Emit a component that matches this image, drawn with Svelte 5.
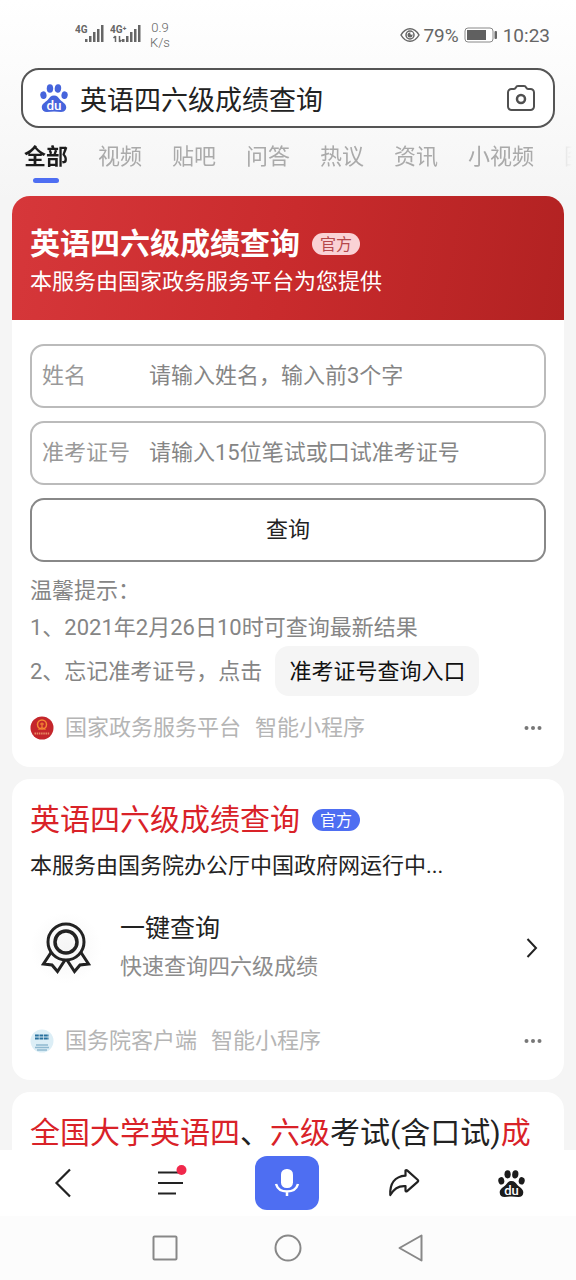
<script lang="ts">
	let query = $state('英语四六级成绩查询');
	let name = $state('');
	let ticket = $state('');
	let activeTab = $state('全部');

	const tabs = ['全部', '视频', '贴吧', '问答', '热议', '资讯', '小视频', '图片'];
	const signalBars = [3, 6, 10, 13, 17];
</script>

{#snippet paw(size: number)}
	<svg class="paw" width={size} height={size} viewBox="0 0 27 27" aria-hidden="true">
		<ellipse cx="3.3" cy="10.8" rx="3" ry="3.7" transform="rotate(-12 3.3 10.8)" />
		<ellipse cx="9.6" cy="4.3" rx="3.1" ry="4.1" />
		<ellipse cx="17.3" cy="4.3" rx="3.1" ry="4.1" transform="rotate(6 17.3 4.3)" />
		<ellipse cx="23.7" cy="10.8" rx="3" ry="3.7" transform="rotate(12 23.7 10.8)" />
		<path d="M13.5 11c-3 0-4.300 2-5.900 4.100-1.700 2.100-5.900 3.700-5.900 7.300 0 3 2.100 4.500 4.900 4.500 2.400 0 4.500-.5 6.900-.5s4.500.5 6.900.5c2.800 0 4.900-1.500 4.900-4.500 0-3.600-4.200-5.200-5.900-7.300-1.600-2.100-2.900-4.100-5.900-4.100z" />
		<text x="13.5" y="25" text-anchor="middle">du</text>
	</svg>
{/snippet}

{#snippet signal(label: string, data: boolean)}
	<svg width="32" height="22" viewBox="0 0 32 22" aria-hidden="true">
		<text class="signal-label" x="0" y="9">{label}</text>
		{#if data}
			<path d="M5.500 12v6M3.500 14l2-2M9.500 12v6M9.500 18l2-2" fill="none" stroke="#666" stroke-width="1.500" />
		{/if}
		{#each signalBars as bar, i}
			<rect x={10 + i * 4 + (data ? 2 : 0)} y={18 - bar} width="2.500" height={bar} fill="#666" />
		{/each}
	</svg>
{/snippet}

{#snippet more()}
	<button class="icon-btn" aria-label="更多">
		<svg width="18" height="6" viewBox="0 0 18 6" fill="#777">
			<circle cx="2.500" cy="3" r="2" />
			<circle cx="9" cy="3" r="2" />
			<circle cx="15.500" cy="3" r="2" />
		</svg>
	</button>
{/snippet}

<div class="screen">
	<header class="status">
		<div class="status-group">
			{@render signal('4G', false)}
			{@render signal('4G⁺', true)}
			<span class="speed">0.9<br />K/s</span>
		</div>
		<div class="status-group right">
			<svg width="20" height="16" viewBox="0 0 20 16" aria-hidden="true" fill="none" stroke="#666" stroke-width="1.500">
				<path d="M1 8c2.300-4 5.300-6.300 9-6.300S16.700 4 19 8c-2.300 4-5.300 6.300-9 6.300S3.300 12 1 8z" />
				<circle cx="10" cy="8" r="4" />
				<circle cx="10" cy="8" r="2.500" fill="#666" stroke="none" />
				<circle cx="11.500" cy="6.500" r="1.200" fill="#fff" stroke="none" />
			</svg>
			<span>79%</span>
			<svg class="battery" width="34" height="16" viewBox="0 0 34 16" aria-hidden="true">
				<rect x="1" y="1" width="28" height="14" rx="3" fill="#fff" stroke="#888" />
				<rect x="3" y="3" width="19" height="10" fill="#606060" />
				<rect x="30.500" y="4" width="2.500" height="8" rx="1" fill="#666" />
			</svg>
			<span>10:23</span>
		</div>
	</header>

	<form class="search" onsubmit={(e) => e.preventDefault()}>
		{@render paw(28)}
		<input type="text" aria-label="搜索" bind:value={query} />
		<button class="icon-btn" type="button" aria-label="拍照搜索">
			<svg width="28" height="26" viewBox="0 0 28 26" fill="none" stroke="#505050" stroke-width="2" stroke-linejoin="round">
				<path d="M4.500 4H7c1 0 1.300-.4 1.700-1.200C9.200 1.600 9.700 1 11 1h6c1.300 0 1.800.6 2.300 1.800.4.8.7 1.200 1.700 1.200h2.500A3.500 3.500 0 0 1 27 7.500v14a3.500 3.500 0 0 1-3.500 3.500h-19A3.500 3.500 0 0 1 1 21.500v-14A3.500 3.500 0 0 1 4.500 4z" />
				<circle cx="14" cy="14" r="4" stroke-width="2.500" />
			</svg>
		</button>
	</form>

	<nav class="tabs">
		{#each tabs as tab}
			<button class="tab" class:active={tab === activeTab} onclick={() => (activeTab = tab)}>{tab}</button>
		{/each}
	</nav>

	<main class="results">
		<section class="card">
			<div class="banner">
				<h2>英语四六级成绩查询 <span class="tag">官方</span></h2>
				<p>本服务由国家政务服务平台为您提供</p>
			</div>
			<form class="query-form" onsubmit={(e) => e.preventDefault()}>
				<div class="field">
					<label for="name">姓名</label>
					<input id="name" type="text" placeholder="请输入姓名，输入前3个字" bind:value={name} />
				</div>
				<div class="field">
					<label for="ticket">准考证号</label>
					<input id="ticket" type="text" placeholder="请输入15位笔试或口试准考证号" bind:value={ticket} />
				</div>
				<button class="submit">查询</button>
			</form>
			<div class="tips">
				<p>温馨提示：</p>
				<p>1、2021年2月26日10时可查询最新结果</p>
				<div class="tip-row">
					<span>2、忘记准考证号，点击</span>
					<button class="entry">准考证号查询入口</button>
				</div>
			</div>
			<footer class="source">
				<svg width="24" height="24" viewBox="0 0 24 24" aria-hidden="true">
					<circle cx="12" cy="12" r="11.500" fill="#c4262b" />
					<circle cx="12" cy="8.500" r="4.500" fill="none" stroke="#f58a33" stroke-width="1.500" />
					<path d="M10 8h4M12 6.500v6M8.500 13.500l3.500-2 3.500 2" fill="none" stroke="#f58a33" stroke-width="1.200" />
					<path d="M4.500 17.500h15" stroke="#e88a62" stroke-width="2" stroke-dasharray="1.500 .7" />
				</svg>
				<span>国家政务服务平台</span>
				<span>智能小程序</span>
				{@render more()}
			</footer>
		</section>

		<section class="card padded">
			<h2 class="title"><em>英语四六级成绩查询</em> <span class="tag blue">官方</span></h2>
			<p class="desc">本服务由国务院办公厅中国政府网运行中...</p>
			<a class="service" href="#query">
				<span class="medal">
					<svg width="50" height="52" viewBox="0 0 50 52" fill="none" stroke="#222" stroke-width="3">
						<circle cx="25" cy="20" r="18" />
						<circle cx="25" cy="20" r="11" stroke-width="3.500" />
						<path d="M10 30.500L2.500 42l8.500 1 5.500 6.500L24 38M40 30.500L47.500 42l-8.500 1-5.500 6.500L26 38" />
					</svg>
				</span>
				<span class="service-text">
					<strong>一键查询</strong>
					<small>快速查询四六级成绩</small>
				</span>
				<svg width="12" height="20" viewBox="0 0 12 20" fill="none" stroke="#222" stroke-width="2">
					<path d="M1.500 1l8.500 9-8.500 9" />
				</svg>
			</a>
			<footer class="source">
				<svg width="24" height="24" viewBox="0 0 24 24" aria-hidden="true">
					<circle cx="12" cy="12" r="11.500" fill="#dceef6" />
					<path d="M5 6.500h14M5 9.500h14" stroke="#28719e" stroke-width="2.200" stroke-dasharray="3.800 .7" />
					<path d="M6 16h12M5 18.500h14M7 21h10" stroke="#8fb9d0" stroke-width="1.500" />
				</svg>
				<span>国务院客户端</span>
				<span>智能小程序</span>
				{@render more()}
			</footer>
		</section>

		<section class="card padded">
			<h2 class="title"><em>全国大学英语四</em>、<em>六级</em>考试(含口试)<em>成</em></h2>
		</section>
	</main>

	<nav class="toolbar">
		<button class="icon-btn" aria-label="返回">
			<svg width="18" height="30" viewBox="0 0 18 30" fill="none" stroke="#222" stroke-width="2.200">
				<path d="M16 1.500L2.500 15 16 28.500" />
			</svg>
		</button>
		<button class="icon-btn" aria-label="菜单">
			<svg width="34" height="38" viewBox="0 0 34 38" stroke="#222" stroke-width="2.200">
				<path d="M5 8.500h20M5 19h25M5 29.500h18" />
				<circle cx="28.500" cy="6" r="5" fill="#f0284b" stroke="none" />
			</svg>
		</button>
		<button class="mic" aria-label="语音搜索">
			<svg width="26" height="30" viewBox="0 0 26 30">
				<rect x="7" y="1" width="12" height="19" rx="5.500" fill="#fff" />
				<path d="M2 16c1.500 5 5.500 7.500 11 7.500S22.500 21 24 16M13 23v5" fill="none" stroke="#fff" stroke-width="2.500" />
			</svg>
		</button>
		<button class="icon-btn" aria-label="分享">
			<svg width="32" height="30" viewBox="0 0 32 30" fill="none" stroke="#222" stroke-width="2.200" stroke-linejoin="round">
				<path d="M17.500 2.500c.5-.6 1-.6 1.600-.1l10.500 9.300c.8.8.8 1.400 0 2.100l-10.500 9.300c-.8.600-1.600.4-1.600-.6v-4.300c-6.500-.6-11.500 2.500-15.200 8.800C1.700 16 6.500 8.500 17.500 7.700z" />
			</svg>
		</button>
		<button class="icon-btn dark" aria-label="百度首页">
			{@render paw(27)}
		</button>
	</nav>

	<nav class="system">
		<button class="icon-btn" aria-label="最近任务">
			<svg width="28" height="28" viewBox="0 0 28 28"><rect x="2.500" y="2.500" width="23" height="23" rx="1" /></svg>
		</button>
		<button class="icon-btn" aria-label="主屏幕">
			<svg width="28" height="28" viewBox="0 0 28 28"><circle cx="14" cy="14" r="12.500" /></svg>
		</button>
		<button class="icon-btn" aria-label="后退">
			<svg width="28" height="28" viewBox="0 0 28 28"><path d="M24.500 1.500v25L2.500 14z" /></svg>
		</button>
	</nav>
</div>

<style>
	:global(body) {
		background: #f5f5f5;
	}
	.screen {
		display: flex;
		flex-direction: column;
		height: 100vh;
		background: linear-gradient(#fff, #f5f5f5 200px);
		font-family: Roboto, 'Noto Sans CJK SC', sans-serif;
		font-size: 22px;
		color: #222;
	}
	h2, p {
		margin: 0;
		font-weight: 400;
	}
	button, input {
		font: inherit;
		color: inherit;
		border: none;
		padding: 0;
		background: none;
		outline: none;
	}
	button {
		cursor: pointer;
	}
	svg {
		display: block;
		flex-shrink: 0;
	}
	.icon-btn {
		display: flex;
		align-items: center;
		justify-content: center;
	}
	.status {
		display: flex;
		justify-content: space-between;
		align-items: center;
		height: 68px;
		padding: 2px 26px 0 75px;
		box-sizing: border-box;
		color: #666;
		font-size: 19px;
	}
	.status-group {
		display: flex;
		align-items: center;
		gap: 3px;
	}
	.signal-label {
		font-size: 10px;
		font-weight: 700;
		fill: #666;
	}
	.speed {
		margin-left: 5px;
		font-size: 13px;
		font-weight: 300;
		line-height: 15px;
		text-align: center;
	}
	.battery {
		margin: 0 2px;
	}
	.search {
		display: flex;
		align-items: center;
		gap: 12px;
		height: 60px;
		margin: 0 21px;
		padding: 0 18px 0 17px;
		box-sizing: border-box;
		border: 2px solid #555;
		border-radius: 18px;
		background: #fff;
	}
	.search input {
		flex: 1;
		min-width: 0;
		font-size: 27px;
	}
	.paw {
		fill: #4664dc;
	}
	.paw text {
		font-size: 13px;
		font-weight: 500;
		fill: #fff;
	}
	.dark .paw {
		fill: #1c1c1c;
	}
	.tabs {
		display: flex;
		gap: 30px;
		height: 68px;
		margin-right: 4px;
		padding-left: 24px;
		overflow: hidden;
		flex-shrink: 0;
		mask-image: linear-gradient(to left, transparent, #000 32px);
	}
	.tab {
		display: flex;
		flex-direction: column;
		align-items: center;
		flex-shrink: 0;
		padding-top: 11px;
		line-height: 36px;
		color: #aaa;
	}
	.tab.active {
		color: #1c1c1c;
		font-weight: 700;
	}
	.tab.active::after {
		content: '';
		width: 26px;
		height: 5px;
		margin-top: 3px;
		border-radius: 3px;
		background: #4e6ef2;
	}
	.results {
		display: flex;
		flex-direction: column;
		gap: 12px;
		flex: 1;
		min-height: 0;
		padding: 0 12px;
		overflow: hidden;
	}
	.card {
		flex-shrink: 0;
		padding-bottom: 20px;
		border-radius: 18px;
		background: #fff;
		overflow: hidden;
	}
	.card.padded {
		padding-top: 22px;
	}
	.banner {
		padding: 29px 18px 19px;
		color: #fff;
		line-height: 38px;
		background: linear-gradient(100deg, #d6373a, #c92b2d 50%, #b22222);
	}
	.banner h2 {
		display: flex;
		align-items: center;
		gap: 12px;
		font-size: 30px;
		font-weight: 700;
	}
	.tag {
		padding: 1px 8px 0;
		border-radius: 11px;
		background: #fad2d5;
		color: #b5484b;
		font-size: 16px;
		font-weight: 400;
		line-height: 21px;
	}
	.tag.blue {
		background: #4e6ef2;
		color: #fff;
	}
	.query-form {
		display: flex;
		flex-direction: column;
		gap: 13px;
		padding: 24px 18px 10px;
		line-height: 28px;
	}
	.field {
		display: flex;
		align-items: center;
		height: 64px;
		padding: 0 10px;
		box-sizing: border-box;
		border: 2px solid #bbb;
		border-radius: 14px;
	}
	.field label {
		width: 107px;
		color: #999;
	}
	.field input {
		flex: 1;
		min-width: 0;
	}
	.field input::placeholder {
		color: #858585;
		opacity: 1;
	}
	.submit {
		height: 64px;
		border: 2px solid #888;
		border-radius: 14px;
	}
	.tips {
		padding: 0 18px;
		color: #858585;
		line-height: 37px;
	}
	.tip-row {
		display: flex;
		align-items: center;
		gap: 13px;
	}
	.entry {
		height: 50px;
		padding: 0 14px;
		border-radius: 14px;
		background: #f5f5f5;
		color: #111;
	}
	.source {
		display: flex;
		align-items: center;
		gap: 14px;
		margin-top: 13px;
		padding: 0 22px 0 18px;
		color: #b5b5b5;
		line-height: 38px;
	}
	.source svg + span {
		margin-left: -3px;
	}
	.source .icon-btn {
		margin-left: auto;
	}
	.title {
		display: flex;
		align-items: center;
		padding: 0 18px;
		font-size: 30px;
		line-height: 38px;
		white-space: nowrap;
	}
	.title em {
		font-style: normal;
		color: #d92228;
	}
	.title .tag {
		margin-left: 12px;
	}
	.desc {
		margin-top: 8px;
		padding: 0 18px;
		line-height: 38px;
	}
	.service {
		display: flex;
		align-items: center;
		gap: 18px;
		margin: 25px 0 36px;
		padding: 0 26px 0 18px;
		color: inherit;
		line-height: 38px;
		text-decoration: none;
	}
	.medal {
		display: flex;
		align-items: center;
		justify-content: center;
		width: 72px;
		height: 72px;
		background: radial-gradient(#f5f5f5, #fff 70%);
	}
	.service-text {
		display: flex;
		flex-direction: column;
		flex: 1;
	}
	.service-text strong {
		font-size: 25px;
		font-weight: 400;
	}
	.service-text small {
		font-size: 22px;
		color: #8c8c8c;
	}
	.toolbar {
		display: grid;
		grid-template-columns: 7fr 5fr 8fr 5fr 7fr;
		align-items: center;
		justify-items: center;
		height: 66px;
		padding-right: 2px;
		flex-shrink: 0;
		background: #fff;
	}
	.mic {
		display: flex;
		align-items: center;
		justify-content: center;
		width: 64px;
		height: 54px;
		border-radius: 12px;
		background: #4e6ef2;
	}
	.system {
		display: flex;
		align-items: center;
		justify-content: center;
		gap: 95px;
		height: 64px;
		flex-shrink: 0;
		background: #fcfcfc;
	}
	.system svg {
		fill: none;
		stroke: #888;
		stroke-width: 2;
		stroke-linejoin: round;
	}
</style>
